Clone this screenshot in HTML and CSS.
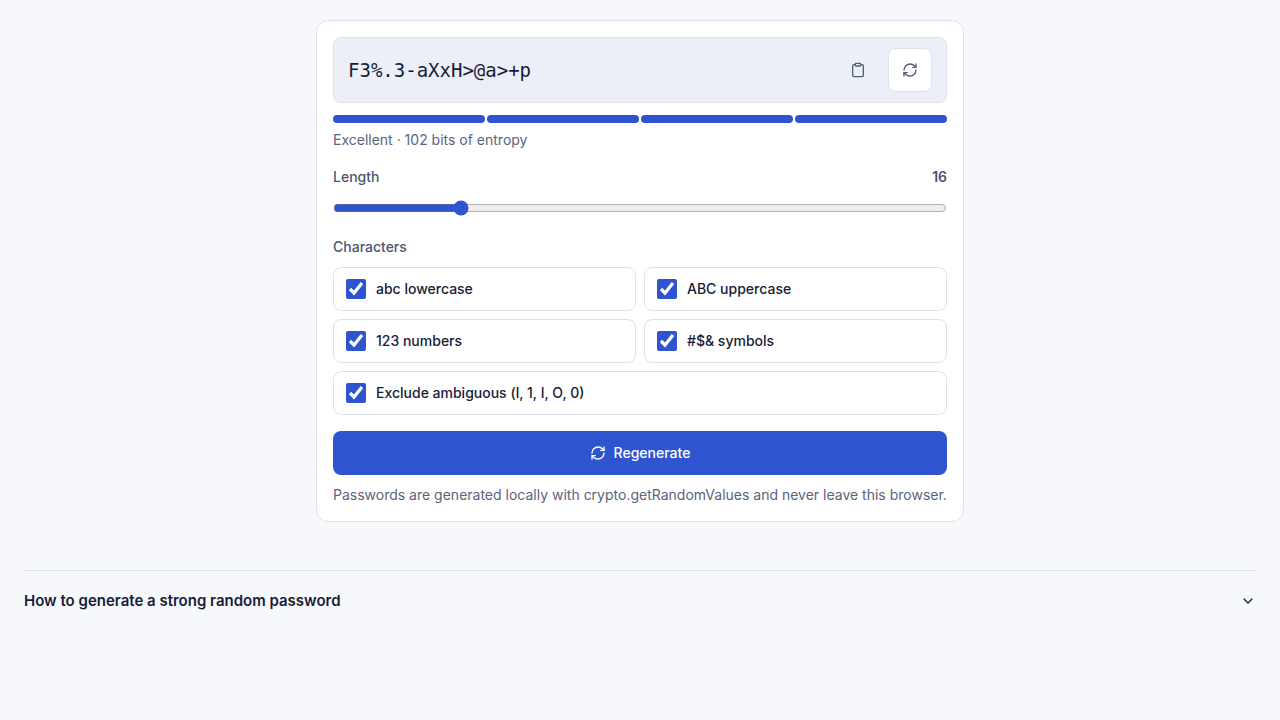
FILE: index.html
```html
<!DOCTYPE html>
<html lang="en">
  <head>
    <meta charset="utf-8">
    <meta name="viewport" content="width=device-width, initial-scale=1">
    <title>Password generator</title>
    <link rel="stylesheet" href="styles.css">
  </head>
  <body>
    <svg class="sprite" aria-hidden="true">
      <symbol id="refresh" viewBox="0 0 24 24">
        <path d="M3 12a9 9 0 0 1 9-9 9.750 9.750 0 0 1 6.740 2.740L21 8"/>
        <path d="M21 3v5h-5"/>
        <path d="M21 12a9 9 0 0 1-9 9 9.750 9.750 0 0 1-6.740-2.740L3 16"/>
        <path d="M8 16H3v5"/>
      </symbol>
    </svg>
    <main class="generator">
      <div class="display">
        <output class="password" id="password">F3%.3-aXxH&gt;@a&gt;+p</output>
        <button class="icon-button" type="button" aria-label="Copy password">
          <svg class="icon" viewBox="0 0 24 24">
            <rect x="8" y="2" width="8" height="4" rx="1"/>
            <path d="M16 4h2a2 2 0 0 1 2 2v14a2 2 0 0 1-2 2H6a2 2 0 0 1-2-2V6a2 2 0 0 1 2-2h2"/>
          </svg>
        </button>
        <button class="icon-button icon-button-solid" type="button" aria-label="Regenerate password">
          <svg class="icon"><use href="#refresh"/></svg>
        </button>
      </div>
      <div class="meter">
        <span class="meter-bar"></span>
        <span class="meter-bar"></span>
        <span class="meter-bar"></span>
        <span class="meter-bar"></span>
      </div>
      <p class="hint">Excellent · 102 bits of entropy</p>

      <div class="length">
        <div class="length-head">
          <label for="length">Length</label>
          <output class="length-value" for="length">16</output>
        </div>
        <input class="slider" id="length" type="range" min="4" max="64" value="16">
      </div>

      <fieldset class="characters">
        <legend>Characters</legend>
        <div class="options">
          <label class="option"><input type="checkbox" checked> abc lowercase</label>
          <label class="option"><input type="checkbox" checked> ABC uppercase</label>
          <label class="option"><input type="checkbox" checked> 123 numbers</label>
          <label class="option"><input type="checkbox" checked> #$&amp; symbols</label>
          <label class="option option-wide"><input type="checkbox" checked> Exclude ambiguous (l, 1, I, O, 0)</label>
        </div>
      </fieldset>

      <button class="regenerate" type="button">
        <svg class="icon"><use href="#refresh"/></svg>
        Regenerate
      </button>
      <p class="hint">Passwords are generated locally with crypto.getRandomValues and never leave this browser.</p>
    </main>

    <details class="guide">
      <summary>
        <h2>How to generate a strong random password</h2>
        <svg class="icon" viewBox="0 0 24 24"><path d="M6 9l6 6 6-6"/></svg>
      </summary>
      <p>Pick a length of at least 16 characters and mix every character set.</p>
    </details>
  </body>
</html>
```
FILE: styles.css
```css
* {
  box-sizing: border-box;
}

body {
  margin: 0;
  padding: 20px 24px;
  background: #f7f8fc;
  color: #161d36;
  font-family: Inter, sans-serif;
  font-size: 14px;
  line-height: 20px;
}

p,
h2 {
  margin: 0;
}

button {
  font: inherit;
  cursor: pointer;
}

.sprite {
  display: none;
}

.icon {
  width: 16px;
  height: 16px;
  fill: none;
  stroke: currentColor;
  stroke-width: 2;
  stroke-linecap: round;
  stroke-linejoin: round;
}

.generator {
  max-width: 648px;
  margin: 0 auto;
  padding: 16px;
  background: #fff;
  border: 1px solid #dfe2ec;
  border-radius: 12px;
}

.display {
  display: flex;
  align-items: center;
  gap: 8px;
  padding: 10px 14px;
  background: #eceff7;
  border: 1px solid #dfe2ec;
  border-radius: 8px;
}

.password {
  flex: 1;
  font-family: "DejaVu Sans Mono", monospace;
  font-size: 19px;
}

.icon-button {
  display: flex;
  align-items: center;
  justify-content: center;
  width: 44px;
  height: 44px;
  padding: 0;
  background: none;
  border: 1px solid transparent;
  border-radius: 8px;
  color: #535d78;
}

.icon-button-solid {
  background: #fff;
  border-color: #dfe2ec;
}

.meter {
  display: flex;
  gap: 2px;
  margin: 12px 0 7px;
}

.meter-bar {
  flex: 1;
  height: 8px;
  background: #2f54d0;
  border-radius: 4px;
}

.hint {
  color: #5a647c;
}

.length {
  margin-top: 17px;
  color: #4b5572;
  font-weight: 500;
}

.length-head {
  display: flex;
  justify-content: space-between;
}

.length-value {
  font-weight: 600;
}

.slider {
  display: block;
  width: 100%;
  height: 16px;
  margin: 13px 0 0;
  accent-color: #2f54d0;
}

.characters {
  margin: 21px 0 16px;
  padding: 0;
  border: 0;
}

.characters legend {
  padding: 0;
  margin-bottom: 10px;
  color: #4b5572;
  font-weight: 500;
}

.options {
  display: grid;
  grid-template-columns: 1fr 1fr;
  gap: 8px;
}

.option {
  display: flex;
  align-items: center;
  gap: 10px;
  min-height: 44px;
  padding: 0 12px;
  border: 1px solid #dfe2ec;
  border-radius: 8px;
  font-weight: 500;
}

.option input {
  width: 20px;
  height: 20px;
  margin: 0;
  accent-color: #2f54d0;
}

.option-wide {
  grid-column: 1 / -1;
}

.regenerate {
  display: flex;
  align-items: center;
  justify-content: center;
  gap: 8px;
  width: 100%;
  min-height: 44px;
  margin-bottom: 10px;
  background: #2f54d0;
  border: 0;
  border-radius: 8px;
  color: #fff;
  font-weight: 500;
}

.guide {
  margin-top: 48px;
  border-top: 1px solid #dfe2ec;
}

.guide summary {
  display: flex;
  align-items: center;
  justify-content: space-between;
  padding: 20px 0;
  list-style: none;
  cursor: pointer;
}

.guide h2 {
  font-size: 15px;
  font-weight: 600;
}
```
